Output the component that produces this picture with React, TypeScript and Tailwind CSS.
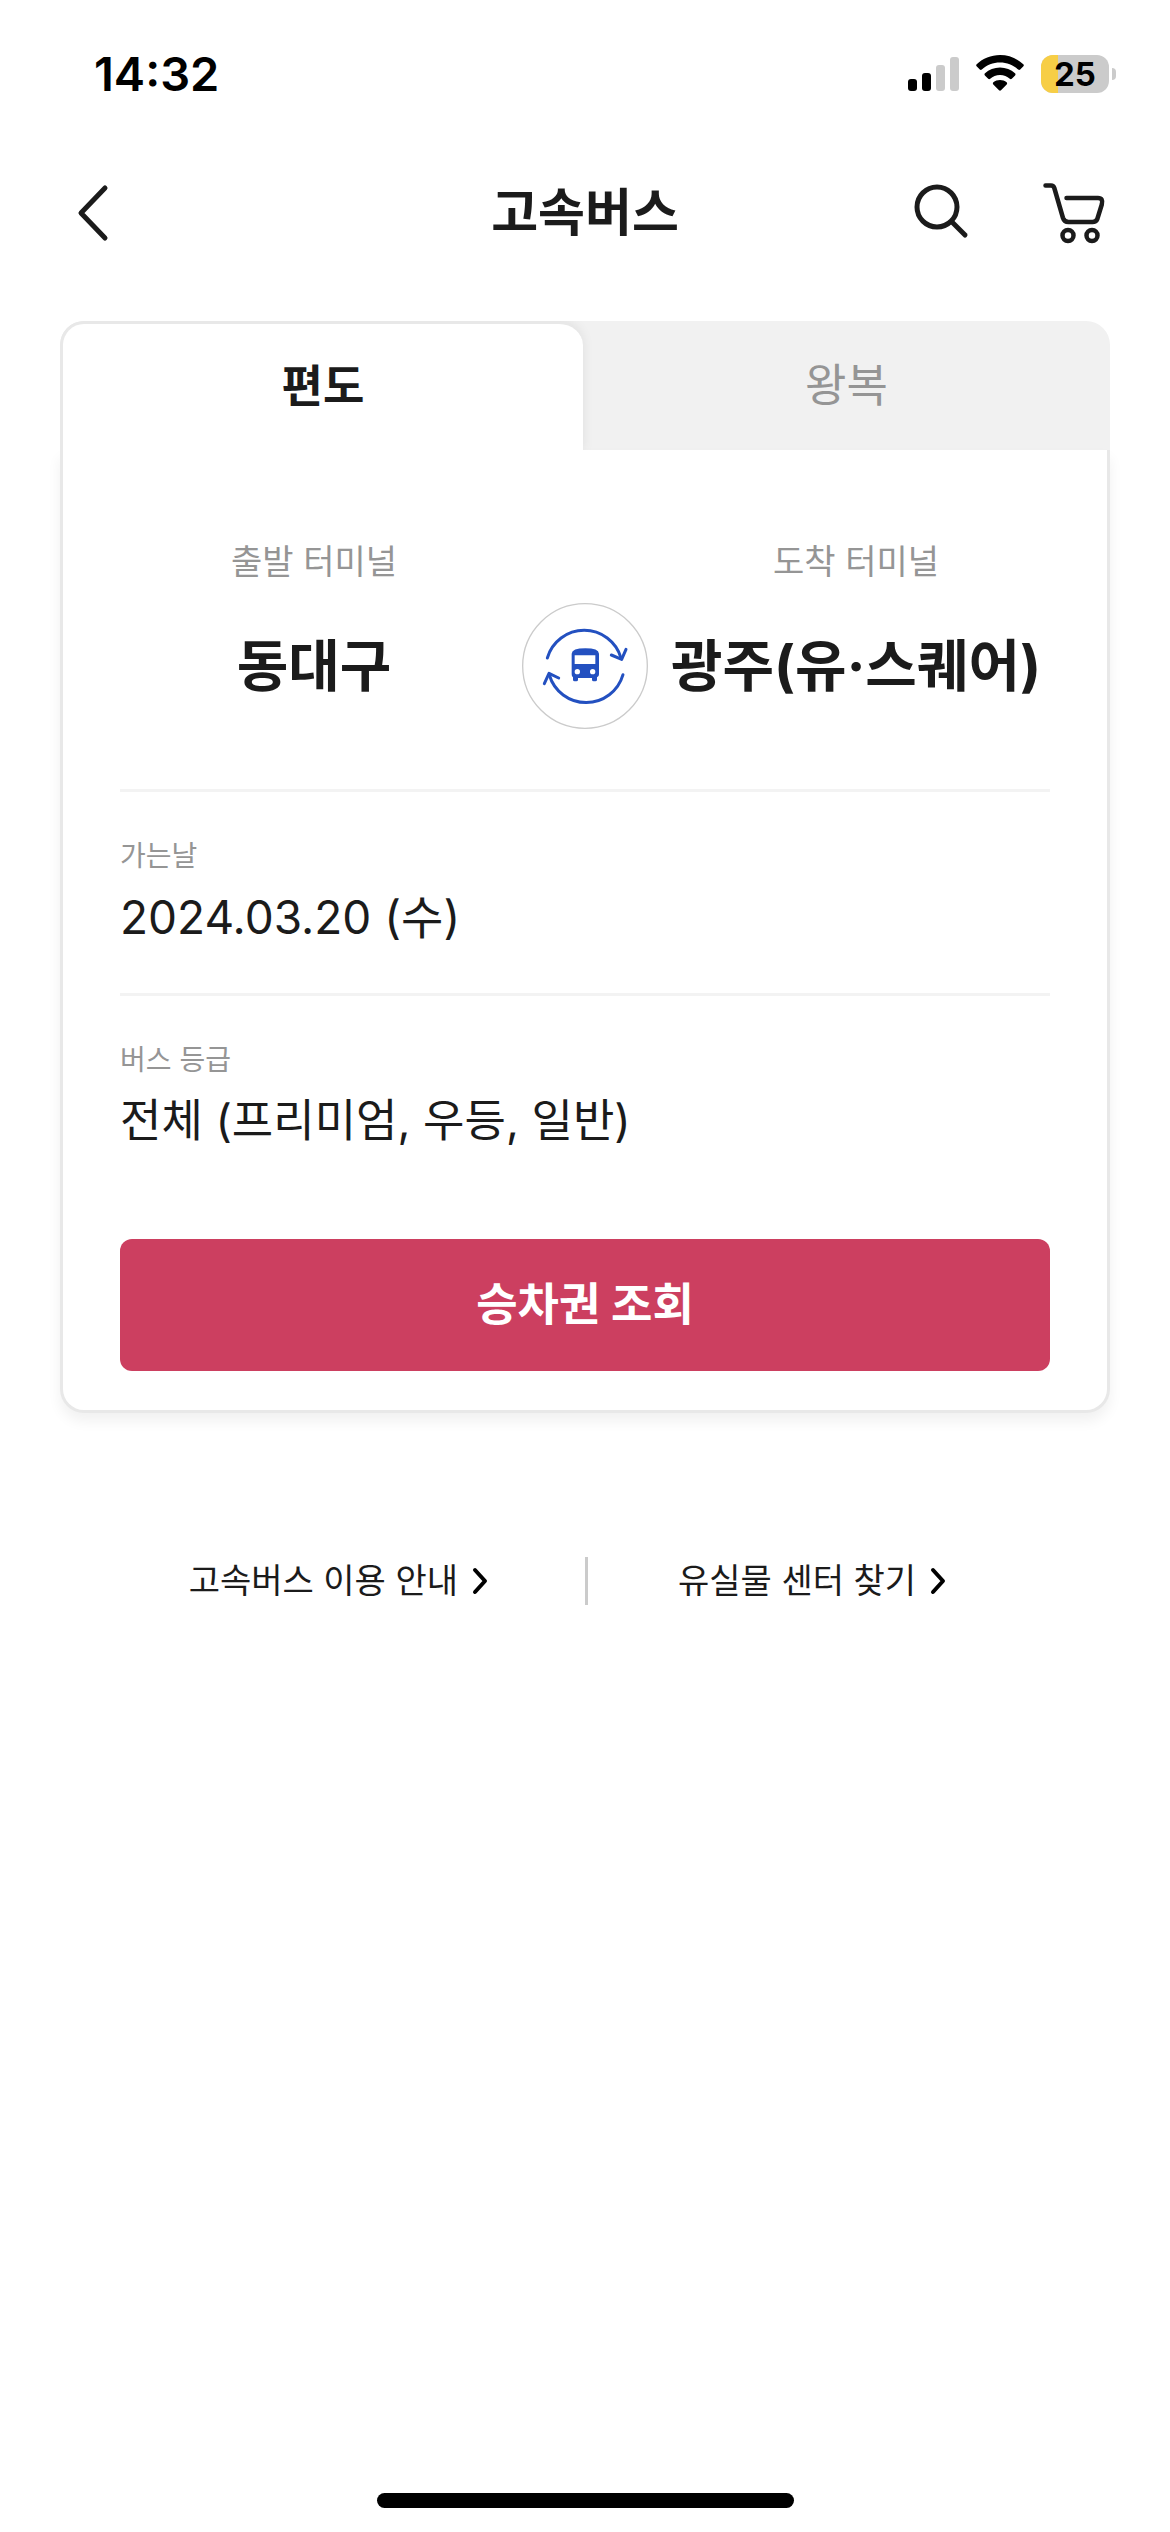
import React from "react";

function SignalIcon() {
  return (
    <svg width="51" height="38" viewBox="0 0 51 38" aria-hidden="true">
      <rect x="0" y="24" width="9" height="12" rx="3" fill="#000" />
      <rect x="14" y="18" width="9" height="18" rx="3" fill="#000" />
      <rect x="28" y="10" width="9" height="26" rx="3" fill="#cbcbcb" />
      <rect x="42" y="2" width="9" height="34" rx="3" fill="#cbcbcb" />
    </svg>
  );
}

function WifiIcon() {
  return (
    <svg width="48" height="38" viewBox="0 0 48 38" aria-hidden="true">
      <path
        d="M24 0C33 0 41.200 3.500 47.300 9.200C48 9.900 48 10.700 47.400 11.300L44.200 14.600C43.600 15.200 42.800 15.200 42.200 14.600C37.300 10.100 30.900 7.500 24 7.500C17.100 7.500 10.700 10.100 5.800 14.600C5.200 15.200 4.400 15.200 3.800 14.600L.6 11.300C0 10.700 0 9.900 .7 9.200C6.800 3.500 15 0 24 0Z"
      />
      <path
        d="M24 12.500C29.800 12.500 35 14.700 39 18.300C39.700 18.900 39.700 19.800 39.100 20.400L35.800 23.700C35.200 24.300 34.400 24.300 33.800 23.800C31.200 21.500 27.800 20.100 24 20.100C20.200 20.100 16.800 21.500 14.200 23.800C13.600 24.300 12.800 24.300 12.200 23.700L8.900 20.400C8.300 19.800 8.300 18.900 9 18.300C13 14.700 18.200 12.500 24 12.500Z"
      />
      <path d="M24 25C26.500 25 28.800 25.900 30.600 27.300C31.300 27.900 31.300 28.800 30.700 29.400L25 35.300C24.400 35.900 23.600 35.900 23 35.300L17.300 29.400C16.700 28.800 16.700 27.900 17.400 27.300C19.200 25.900 21.500 25 24 25Z" />
    </svg>
  );
}

function Battery({ level }: { level: number }) {
  return (
    <div className="flex items-center gap-[3px]">
      <div className="relative flex h-[38px] w-[68px] items-center justify-center rounded-[12px] bg-[#cbcbcb]">
        <div className="absolute inset-y-0 left-0 rounded-l-[12px] bg-[#f7ce46]" style={{ width: `${level}%` }} />
        <span className="relative text-[33px] leading-[40px] font-bold">{level}</span>
      </div>
      <div className="h-[12px] w-[4px] rounded-r-full bg-[#cbcbcb]" />
    </div>
  );
}

function StatusBar() {
  return (
    <div className="flex h-[148px] items-center justify-between pr-[54px] pl-[94px] text-black">
      <time className="text-[47px] leading-[56px] font-semibold">14:32</time>
      <div className="flex items-center gap-[17px]">
        <SignalIcon />
        <WifiIcon />
        <Battery level={25} />
      </div>
    </div>
  );
}

function Header() {
  return (
    <header className="grid h-[130px] grid-cols-[1fr_auto_1fr] items-center px-[63px]">
      <button type="button" aria-label="뒤로" className="justify-self-start pl-[13px]">
        <svg width="34" height="60" viewBox="0 0 34 60" fill="none" stroke="#1b1b1b" strokeWidth="5" strokeLinecap="round" strokeLinejoin="round">
          <path d="M29 5L5 30L29 55" />
        </svg>
      </button>
      <h1 className="text-[51px] leading-[72px] font-bold">고속버스</h1>
      <div className="flex items-center justify-end gap-[71px]">
        <button type="button" aria-label="검색">
          <svg width="58" height="64" viewBox="912 181 58 64" fill="none" stroke="#1b1b1b" strokeWidth="5" strokeLinecap="round">
            <circle cx="937" cy="207" r="20" />
            <path d="M952 222L965 235" />
          </svg>
        </button>
        <button type="button" aria-label="장바구니">
          <svg width="66" height="64" viewBox="1041 181 66 64" fill="none" stroke="#1b1b1b" strokeWidth="4.500" strokeLinecap="round" strokeLinejoin="round">
            <path d="M1045.500 185.500H1051Q1053.500 185.500 1054.300 188L1063 218Q1064.300 222 1068.500 222H1092.500Q1096 222 1097.300 219L1101.800 204.500Q1103.500 198 1098 198H1066.500" />
            <circle cx="1068" cy="235.500" r="5.500" />
            <circle cx="1092" cy="235.500" r="5.500" />
          </svg>
        </button>
      </div>
    </header>
  );
}

function SwapIcon() {
  return (
    <svg width="126" height="126" viewBox="66 68 378 378" fill="none" aria-hidden="true">
      <circle cx="255" cy="257" r="187" stroke="#cbcbcb" strokeWidth="4" fill="#fff" />
      <g stroke="#2350c0" strokeWidth="9" strokeLinecap="round" strokeLinejoin="round">
        <path d="M142 233A115 115 0 0 1 363 233" />
        <path d="M334 224L365 237L378 207" />
        <path d="M369 283A115 115 0 0 1 148 284" />
        <path d="M133 310L147 279L176 293" />
      </g>
      <path
        fill="#2350c0"
        fillRule="evenodd"
        d="M215 220Q216 204 256 204Q296 204 297 220V282Q297 290 291 291V298Q291 303 286 303H281Q276 303 276 298V293H234V298Q234 303 229 303H224Q219 303 219 298V291Q215 290 215 282ZM224 225V251H286V225ZM224 274a8 8 0 1 0 16 0a8 8 0 1 0 -16 0ZM270 274a8 8 0 1 0 16 0a8 8 0 1 0 -16 0Z"
      />
    </svg>
  );
}

function Field({ label, value, numeric }: { label: string; value: string; numeric?: boolean }) {
  return (
    <button type="button" className="block w-full border-t-[3px] border-[#f3f3f3] pt-[44px] pb-[42px] text-left">
      <span className="block text-[28px] leading-[40px] text-[#959595]">{label}</span>
      <span className={numeric ? "mt-[7px] block text-[46px] leading-[68px]" : "mt-[7px] block text-[45px] leading-[68px]"}>
        {value}
      </span>
    </button>
  );
}

function MoreLink({ children, className }: { children: React.ReactNode; className: string }) {
  return (
    <a href="#" className={`flex h-[48px] items-center gap-[13px] text-[34px] leading-[48px] ${className}`}>
      {children}
      <svg width="18" height="30" viewBox="0 0 18 30" fill="none" stroke="#000" strokeWidth="4" strokeLinecap="round" strokeLinejoin="round" aria-hidden="true">
        <path d="M4 4L14 15L4 26" />
      </svg>
    </a>
  );
}

export default function App() {
  return (
    <div className="flex min-h-screen flex-col bg-white font-['Inter','Noto_Sans_CJK_KR',sans-serif] text-[#1b1b1b]">
      <StatusBar />
      <Header />
      <main className="px-[60px] pt-[43px]">
        <section>
          <div role="tablist" className="grid grid-cols-[523fr_527fr] overflow-hidden rounded-t-[24px] bg-[#f1f1f1]">
            <button
              type="button"
              role="tab"
              aria-selected="true"
              className="h-[129px] rounded-t-[24px] border-t-[3px] border-l-[3px] border-[#e8e8e8] bg-white text-[45px] leading-[64px] font-bold shadow-[0_0_12px_rgba(0,0,0,0.08)]"
            >
              편도
            </button>
            <button type="button" role="tab" aria-selected="false" className="h-[129px] text-[45px] leading-[64px] text-[#959595]">
              왕복
            </button>
          </div>
          <div className="rounded-b-[24px] border-x-[3px] border-b-[3px] border-[#e8e8e8] bg-white pt-[87px] pb-[39px] shadow-[0_8px_14px_rgba(0,0,0,0.06)]">
            <div className="grid grid-cols-[1fr_126px_1fr] items-center gap-y-[16px] px-[43px] pb-[60px] text-center whitespace-nowrap">
              <span className="text-[34px] leading-[50px] text-[#959595]">출발 터미널</span>
              <span className="col-start-3 text-[34px] leading-[50px] text-[#959595]">도착 터미널</span>
              <button type="button" className="text-[56px] leading-[80px] font-bold">
                동대구
              </button>
              <button type="button" aria-label="출발지와 도착지 바꾸기" className="rounded-full">
                <SwapIcon />
              </button>
              <button type="button" className="text-[56px] leading-[80px] font-bold">
                광주(유·스퀘어)
              </button>
            </div>
            <div className="px-[57px]">
              <Field label="가는날" value="2024.03.20 (수)" numeric />
              <Field label="버스 등급" value="전체 (프리미엄, 우등, 일반)" />
              <button type="button" className="mt-[42px] block h-[132px] w-full rounded-[12px] bg-[#cc3f60] text-[45px] leading-[64px] font-bold text-white">
                승차권 조회
              </button>
            </div>
          </div>
        </section>
        <nav className="mt-[144px] grid grid-cols-2">
          <MoreLink className="justify-end pr-[96px]">고속버스 이용 안내</MoreLink>
          <MoreLink className="border-l-[3px] border-[#cbcbcb] pl-[90px]">유실물 센터 찾기</MoreLink>
        </nav>
      </main>
      <div className="mt-auto flex justify-center pb-[24px]">
        <div className="h-[15px] w-[417px] rounded-full bg-black" />
      </div>
    </div>
  );
}
